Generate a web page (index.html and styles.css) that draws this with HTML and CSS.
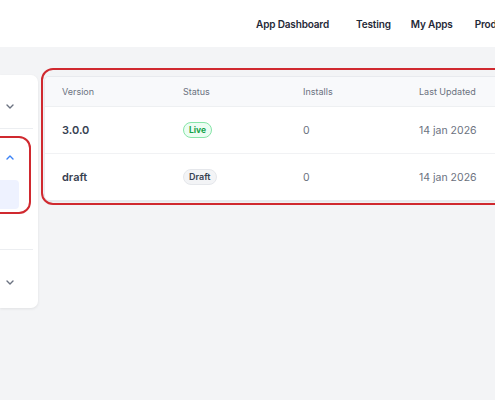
FILE: index.html
```html
<!DOCTYPE html>
<html>
<head>
<meta charset="utf-8">
<link rel="stylesheet" href="styles.css">
</head>
<body>
<header class="topbar">
  <nav class="nav">
    <a class="nav-item nav-dash">App Dashboard</a>
    <a class="nav-item nav-test">Testing</a>
    <a class="nav-item nav-apps">My Apps</a>
    <a class="nav-item">Products</a>
  </nav>
</header>
<main class="main">
  <aside class="sidebar">
    <section class="side-sec sec1">
      <div class="side-row">
        <svg class="chev" width="8" height="5" viewBox="0 0 8 5"><path d="M1 1l3 3 3-3" fill="none" stroke="#6b7280" stroke-width="1.4" stroke-linecap="round" stroke-linejoin="round"/></svg>
      </div>
    </section>
    <section class="side-sec sec2">
      <div class="side-row">
        <svg class="chev" width="8" height="5" viewBox="0 0 8 5"><path d="M1 4l3-3 3 3" fill="none" stroke="#3b82f6" stroke-width="1.4" stroke-linecap="round" stroke-linejoin="round"/></svg>
      </div>
      <div class="side-sub"></div>
      <div class="annot annot-side"></div>
    </section>
    <section class="side-sec sec3">
      <div class="side-row">
        <svg class="chev" width="8" height="5" viewBox="0 0 8 5"><path d="M1 1l3 3 3-3" fill="none" stroke="#6b7280" stroke-width="1.4" stroke-linecap="round" stroke-linejoin="round"/></svg>
      </div>
    </section>
  </aside>
  <div class="table-wrap">
    <div class="annot annot-table"></div>
    <div class="card">
      <div class="trow thead">
        <div class="cell c1">Version</div>
        <div class="cell c2">Status</div>
        <div class="cell c3">Installs</div>
        <div class="cell c4">Last Updated</div>
      </div>
      <div class="trow tbody">
        <div class="cell c1 ver">3.0.0</div>
        <div class="cell c2"><span class="badge live">Live</span></div>
        <div class="cell c3">0</div>
        <div class="cell c4">14 jan 2026</div>
      </div>
      <div class="trow tbody last">
        <div class="cell c1 ver">draft</div>
        <div class="cell c2"><span class="badge draft">Draft</span></div>
        <div class="cell c3">0</div>
        <div class="cell c4">14 jan 2026</div>
      </div>
    </div>
  </div>
</main>
</body>
</html>
```
FILE: styles.css
```css
* { box-sizing: border-box; }
html, body { margin: 0; padding: 0; }
body {
  width: 495px;
  height: 400px;
  overflow: hidden;
  background: #f3f4f6;
  font-family: Inter, "Liberation Sans", sans-serif;
  color: #111827;
}
.topbar {
  height: 47px;
  background: #fff;
  display: flex;
  align-items: center;
  padding-left: 256px;
  padding-top: 1px;
  white-space: nowrap;
  overflow: hidden;
}
.nav { display: flex; align-items: center; }
.nav-item {
  font-size: 10px;
  font-weight: 600;
  color: #1f2937;
  letter-spacing: -0.15px;
}
.nav-dash { margin-right: 27px; }
.nav-test { margin-right: 20px; }
.nav-apps { margin-right: 22px; }

.main {
  display: flex;
  align-items: flex-start;
  gap: 6px;
  padding-top: 28px;
}
.sidebar {
  flex: none;
  width: 38px;
  height: 233px;
  background: #fff;
  border-radius: 0 7px 7px 0;
  box-shadow: 0 1px 3px rgba(0,0,0,0.08);
  padding-right: 5px;
}
.side-sec { position: relative; }
.sec1 { padding: 19px 0 10px; border-bottom: 1px solid #eceef1; }
.sec2 { padding: 16px 0 40px; border-bottom: 1px solid #eceef1; }
.sec3 { padding: 20px 0 14px; }
.side-row {
  height: 24px;
  display: flex;
  align-items: center;
  justify-content: flex-end;
  padding-right: 19px;
}
.chev { display: block; }
.side-sub {
  margin-top: 11px;
  width: 19px;
  height: 29px;
  background: #eef2ff;
  border-radius: 0 4px 4px 0;
}
.annot {
  position: absolute;
  border: 2px solid #d0292f;
  border-radius: 12px;
  pointer-events: none;
}
.annot-side {
  top: 7px;
  left: -30px;
  width: 61px;
  height: 78px;
}
.table-wrap {
  position: relative;
  flex: none;
  width: 560px;
  margin-top: 1px;
}
.annot-table {
  top: -8px;
  left: -3px;
  right: -20px;
  height: 137px;
  z-index: 2;
}
.card {
  background: #fff;
  border: 1px solid #e8eaee;
  border-radius: 5px;
  overflow: hidden;
  box-shadow: 0 1px 2px rgba(0,0,0,0.06);
}
.trow { display: flex; align-items: center; }
.thead {
  height: 30px;
  background: #f8f9fb;
  border-bottom: 1px solid #eef0f2;
  font-size: 9px;
  color: #6b7280;
}
.tbody {
  height: 47px;
  border-bottom: 1px solid #f1f2f4;
  font-size: 10.5px;
  color: #6b7280;
}
.tbody.last { border-bottom: 0; height: 46px; }
.cell { padding-left: 17px; white-space: nowrap; }
.c1 { width: 121px; }
.c2 { width: 120px; }
.c3 { width: 116px; }
.c4 { width: 150px; }
.ver { font-weight: 600; color: #374151; font-size: 11px; }
.badge {
  display: inline-block;
  font-size: 8.5px;
  font-weight: 700;
  border-radius: 8px;
  border: 1px solid;
  line-height: 12px;
}
.live {
  color: #16a34a;
  background: #ecfdf3;
  border-color: #86e5a8;
  padding: 1px 5px;
}
.draft {
  color: #374151;
  background: #f3f4f6;
  border-color: #e5e7eb;
  padding: 1px 5px;
  font-weight: 600;
  font-size: 9px;
}
```
